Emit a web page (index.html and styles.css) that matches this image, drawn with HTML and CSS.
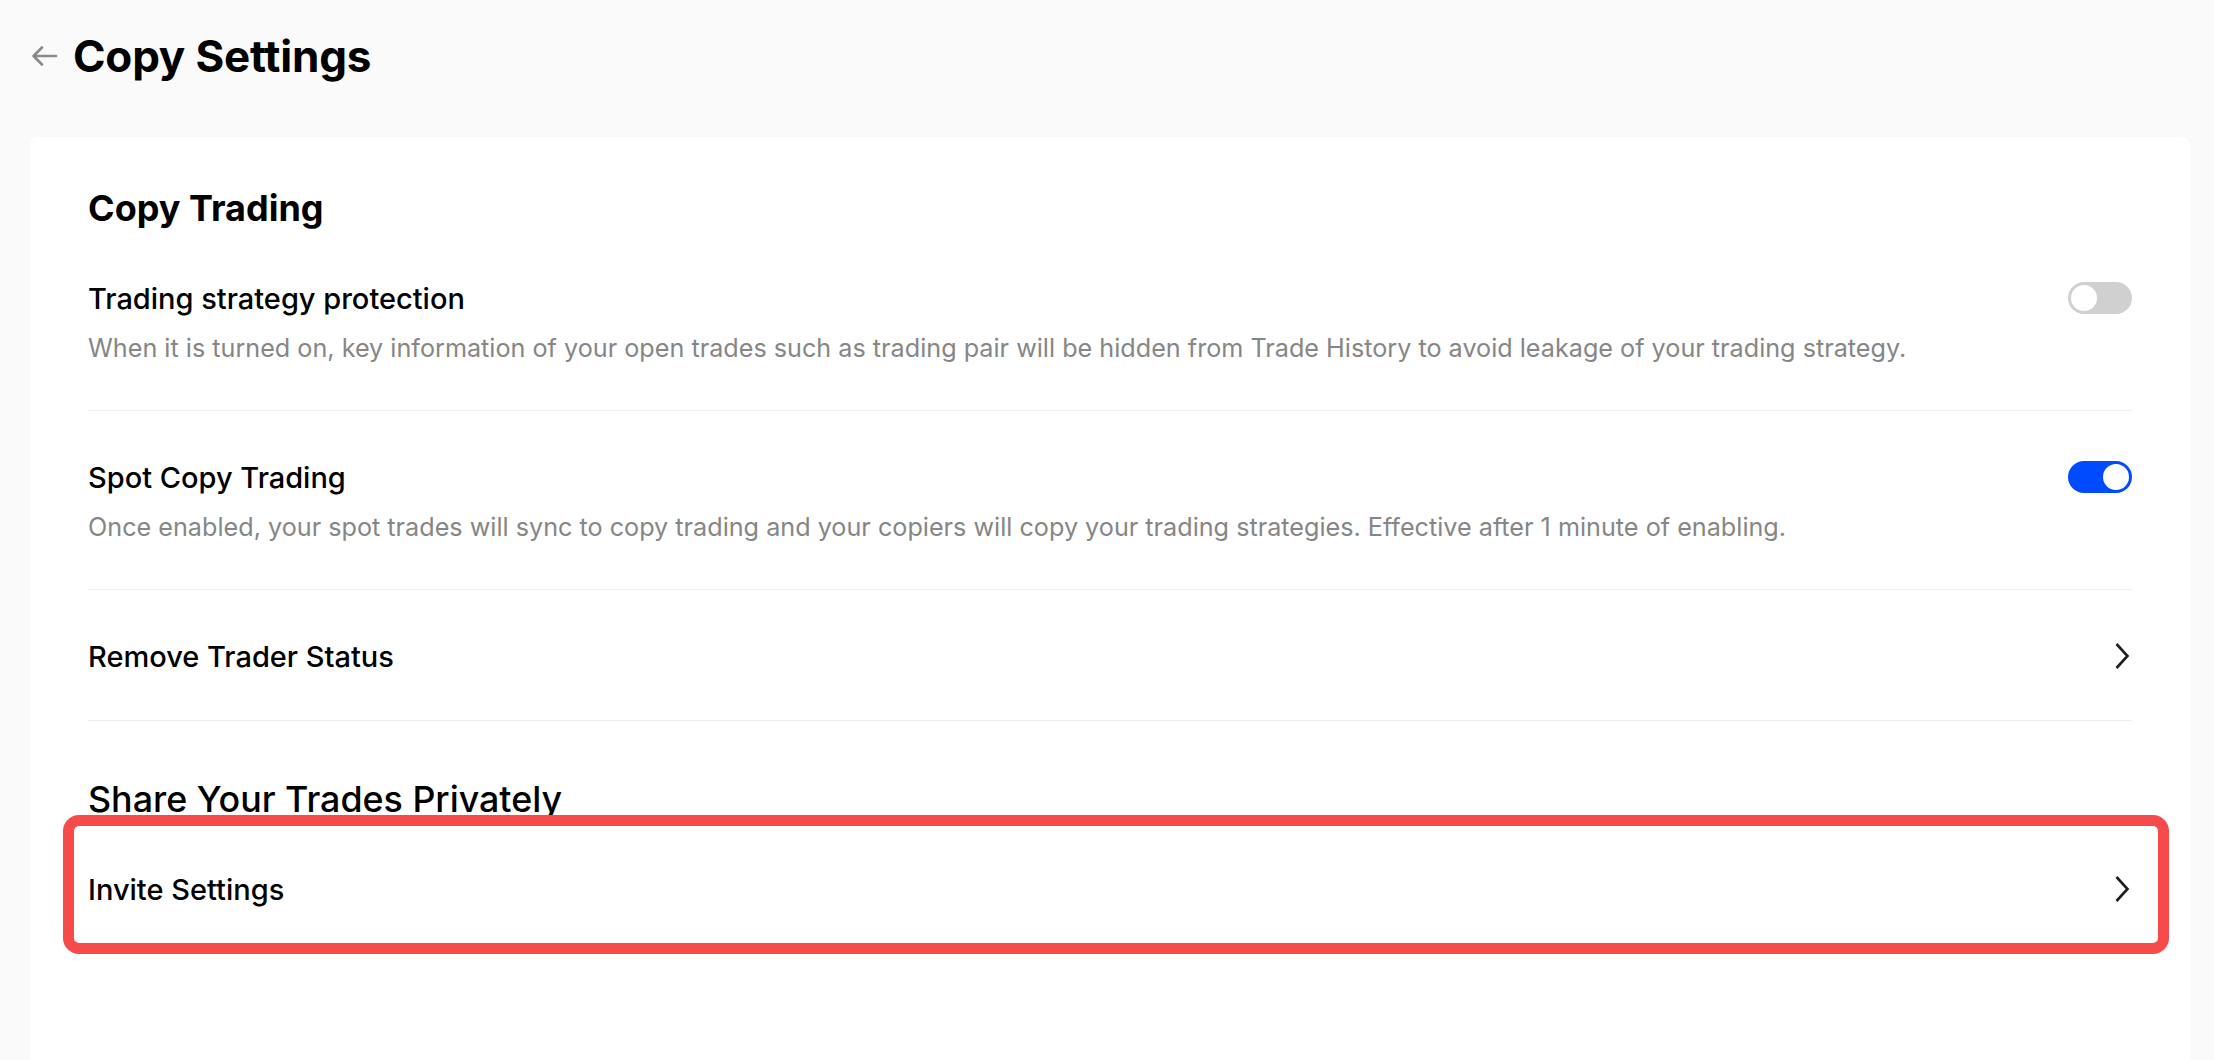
FILE: index.html
```html
<!DOCTYPE html>
<html lang="en">
<head>
  <meta charset="UTF-8">
  <title>Copy Settings</title>
  <link rel="stylesheet" href="styles.css">
</head>
<body>
  <div class="page">
    <header class="topbar">
      <button class="back" type="button" aria-label="Back">
        <svg viewBox="0 0 28 28" width="28" height="28"><path d="M26 14H4M12 5.5L3.5 14L12 22.5" stroke="#8a8a8a" stroke-width="2.6" fill="none" stroke-linecap="round" stroke-linejoin="round"/></svg>
      </button>
      <h1 class="titulo">Copy Settings</h1>
    </header>

    <main class="card">
      <!-- Copy Trading -->
      <section class="grupo">
        <h2 class="grupo-titulo">Copy Trading</h2>

        <div class="item">
          <div class="item-texto">
            <div class="item-nome">Trading strategy protection</div>
            <div class="item-desc">When it is turned on, key information of your open trades such as trading pair will be hidden from Trade History to avoid leakage of your trading strategy.</div>
          </div>
          <span class="switch"></span>
        </div>

        <div class="item">
          <div class="item-texto">
            <div class="item-nome">Spot Copy Trading</div>
            <div class="item-desc">Once enabled, your spot trades will sync to copy trading and your copiers will copy your trading strategies. Effective after 1 minute of enabling.</div>
          </div>
          <span class="switch ligado"></span>
        </div>

        <div class="item item-link">
          <div class="item-texto">
            <div class="item-nome">Remove Trader Status</div>
          </div>
          <svg class="seta" viewBox="0 0 20 28" width="20" height="28"><path d="M4.5 2L15.5 14L4.5 26" stroke="#1e1e1e" stroke-width="2.6" fill="none"/></svg>
        </div>
      </section>

      <!-- Share -->
      <section class="grupo grupo-share">
        <h2 class="grupo-titulo leve">Share Your Trades Privately</h2>
        <div class="item item-link sem-linha destaque">
          <div class="item-texto">
            <div class="item-nome">Invite Settings</div>
          </div>
          <svg class="seta" viewBox="0 0 20 28" width="20" height="28"><path d="M4.5 2L15.5 14L4.5 26" stroke="#1e1e1e" stroke-width="2.6" fill="none"/></svg>
        </div>
      </section>
    </main>
  </div>
</body>
</html>
```

FILE: styles.css
```css
html, body {
  margin: 0;
  height: 100%;
  overflow: hidden;
}
body {
  background: #fafafa;
  font-family: Inter, "Noto Sans", Arial, sans-serif;
  color: #000;
}
.page {
  min-height: 100vh;
  display: flex;
  flex-direction: column;
}
.topbar {
  display: flex;
  align-items: center;
  gap: 15px;
  padding: 28px 0 0 30px;
  height: 56px;
}
.back {
  background: none;
  border: none;
  padding: 0;
  width: 28px;
  height: 28px;
  cursor: pointer;
}
.back svg {
  display: block;
}
.titulo {
  margin: 0;
  font-size: 44px;
  line-height: 56px;
  font-weight: 700;
  letter-spacing: -0.2px;
}
.card {
  flex: 1;
  margin: 53px 24px 0 30px;
  background: #fff;
  border-radius: 8px 8px 0 0;
  padding: 47px 58px 0;
}
.grupo-titulo {
  margin: 0;
  font-size: 36px;
  line-height: 48px;
  font-weight: 700;
}
.grupo-titulo.leve {
  font-size: 35.8px;
  font-weight: 500;
}
.grupo-share {
  margin-top: 54px;
}
.item {
  display: flex;
  align-items: flex-start;
  justify-content: space-between;
  gap: 40px;
  padding: 45px 0 41px;
  border-bottom: 1px solid #eeeeee;
  position: relative;
}
.item.sem-linha {
  border-bottom: none;
}
.item-nome {
  font-size: 29px;
  line-height: 44px;
  font-weight: 500;
}
.item-desc {
  margin: 11px 0 4px;
  font-size: 25.2px;
  line-height: 33px;
  color: #868686;
}
.switch {
  flex: none;
  position: relative;
  width: 64px;
  height: 32px;
  margin-top: 5px;
  border-radius: 16px;
  background: #d0d0d0;
  cursor: pointer;
}
.switch::after {
  content: "";
  position: absolute;
  top: 3px;
  left: 3px;
  width: 26px;
  height: 26px;
  border-radius: 50%;
  background: #fff;
}
.switch.ligado {
  background: #004bff;
}
.switch.ligado::after {
  left: 35px;
}
.seta {
  flex: none;
  display: block;
  margin-top: 7px;
}
/* Marca vermelha em volta do item */
.destaque::before {
  content: "";
  position: absolute;
  top: -8px;
  left: -25px;
  right: -37px;
  bottom: -1px;
  border: 11px solid #f74b4b;
  border-radius: 16px;
  pointer-events: none;
}
```
